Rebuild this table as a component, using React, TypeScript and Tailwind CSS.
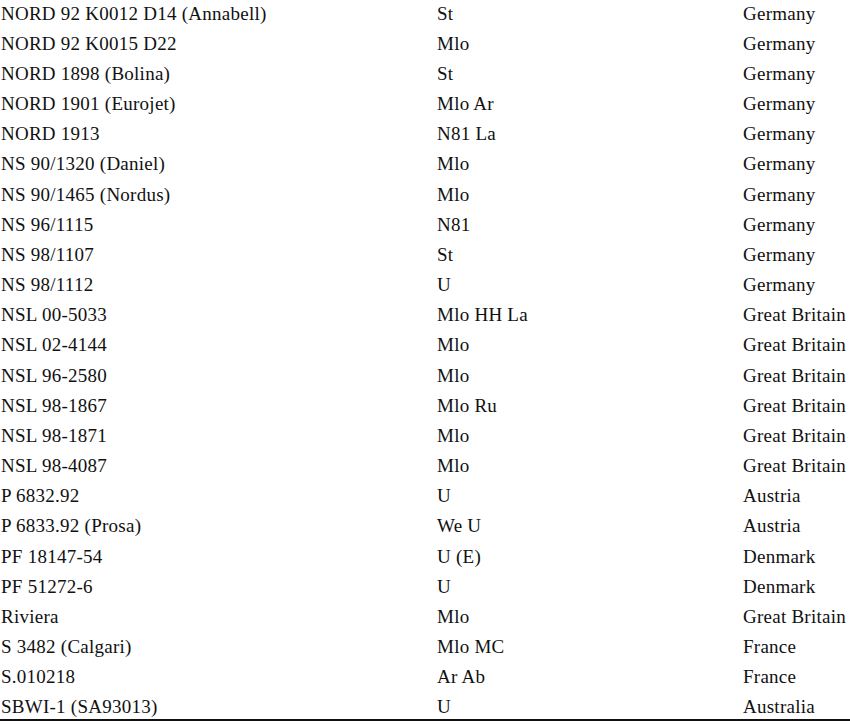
const rows: [string, string, string][] = [
  ['NORD 92 K0012 D14 (Annabell)', 'St', 'Germany'],
  ['NORD 92 K0015 D22', 'Mlo', 'Germany'],
  ['NORD 1898 (Bolina)', 'St', 'Germany'],
  ['NORD 1901 (Eurojet)', 'Mlo Ar', 'Germany'],
  ['NORD 1913', 'N81 La', 'Germany'],
  ['NS 90/1320 (Daniel)', 'Mlo', 'Germany'],
  ['NS 90/1465 (Nordus)', 'Mlo', 'Germany'],
  ['NS 96/1115', 'N81', 'Germany'],
  ['NS 98/1107', 'St', 'Germany'],
  ['NS 98/1112', 'U', 'Germany'],
  ['NSL 00-5033', 'Mlo HH La', 'Great Britain'],
  ['NSL 02-4144', 'Mlo', 'Great Britain'],
  ['NSL 96-2580', 'Mlo', 'Great Britain'],
  ['NSL 98-1867', 'Mlo Ru', 'Great Britain'],
  ['NSL 98-1871', 'Mlo', 'Great Britain'],
  ['NSL 98-4087', 'Mlo', 'Great Britain'],
  ['P 6832.92', 'U', 'Austria'],
  ['P 6833.92 (Prosa)', 'We U', 'Austria'],
  ['PF 18147-54', 'U (E)', 'Denmark'],
  ['PF 51272-6', 'U', 'Denmark'],
  ['Riviera', 'Mlo', 'Great Britain'],
  ['S 3482 (Calgari)', 'Mlo MC', 'France'],
  ['S.010218', 'Ar Ab', 'France'],
  ['SBWI-1 (SA93013)', 'U', 'Australia'],
];

export default function App() {
  return (
    <div className="w-[850px] h-[725px] overflow-hidden bg-white text-[#111] font-['Liberation_Serif',serif] text-[19px] tracking-[0.25px]">
      {/* table body, ruled off at the bottom */}
      <div className="mt-[-1.5px] h-[722.5px] border-b-2 border-[#111]">
        {rows.map((r, i) => (
          <div key={i} className="grid grid-cols-[437px_306px_1fr] h-[30.18px] leading-[30.18px] whitespace-nowrap">
            <span className="pl-[1px]">{r[0]}</span>
            <span>{r[1]}</span>
            <span>{r[2]}</span>
          </div>
        ))}
      </div>
    </div>
  );
}
